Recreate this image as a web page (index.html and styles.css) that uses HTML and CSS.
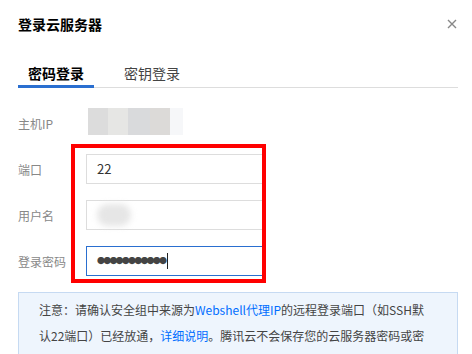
FILE: index.html
```html
<!DOCTYPE html>
<html lang="zh">
<head>
<meta charset="utf-8">
<link rel="stylesheet" href="styles.css">
</head>
<body>
<div class="dialog">
  <div class="header">
    <h1 class="title">登录云服务器</h1>
    <svg class="close" width="10" height="10" viewBox="0 0 10 10"><path d="M1 1L9 9M9 1L1 9" stroke="#888" stroke-width="1.4" fill="none"/></svg>
  </div>
  <div class="tabs">
    <div class="tab active">密码登录</div>
    <div class="tab">密钥登录</div>
  </div>
  <div class="form">
    <div class="row">
      <div class="label">主机IP</div>
      <div class="ip-blur">
        <span class="b1"></span><span class="b2"></span><span class="b3"></span><span class="b4"></span><span class="b5"></span>
      </div>
    </div>
    <div class="row">
      <div class="label">端口</div>
      <div class="input">22</div>
    </div>
    <div class="row">
      <div class="label">用户名</div>
      <div class="input"><span class="user-blur"></span></div>
    </div>
    <div class="row">
      <div class="label">登录密码</div>
      <div class="input focus"><span class="dots">●●●●●●●●●●●</span><span class="caret"></span></div>
    </div>
    <div class="redbox"></div>
  </div>
  <div class="notice">注意：请确认安全组中来源为<a class="link">Webshell代理IP</a>的远程登录端口（如SSH默认22端口）已经放通，<a class="link">详细说明</a>。腾讯云不会保存您的云服务器密码或密钥，请妥善保管避免丢失。</div>
</div>
</body>
</html>
```
FILE: styles.css
```css
* { box-sizing: border-box; margin: 0; padding: 0; }
html, body { background: #fff; }
body {
  font-family: "Noto Sans CJK SC", "Liberation Sans", sans-serif;
  color: #333;
  width: 472px;
  height: 354px;
  overflow: hidden;
}
.dialog { padding: 0 14px 0 18px; }
.header {
  display: flex;
  justify-content: space-between;
  align-items: center;
  height: 48px;
  padding-right: 1px;
}
.title { font-size: 14px; font-weight: bold; color: #000; line-height: 20px; }
.close { display: block; }
.tabs {
  display: flex;
  border-bottom: 1px solid #ddd;
  margin-top: 8px;
}
.tab {
  font-size: 14px;
  line-height: 20px;
  padding: 7px 10px 4px;
  color: #444;
  margin-right: 20px;
}
.tab.active {
  color: #000;
  font-weight: bold;
  border-bottom: 3px solid #2a6fd0;
  margin-bottom: -1px;
  padding-bottom: 1px;
}
.form { position: relative; padding-top: 20px; }
.row {
  display: flex;
  align-items: center;
  height: 30px;
  margin-bottom: 16px;
}
.label {
  width: 68px;
  font-size: 12px;
  color: #888;
}
.ip-blur { display: flex; height: 27px; margin-left: 2px; margin-top: -4px; }
.ip-blur span { display: block; height: 27px; }
.b1 { width: 20px; background: #dcdcdc; }
.b2 { width: 20px; background: #e6e6e4; }
.b3 { width: 22px; background: #d9dadc; }
.b4 { width: 20px; background: #dcdad8; }
.b5 { width: 13px; background: #f6f7f9; }
.input {
  width: 180px;
  height: 30px;
  border: 1px solid #ddd;
  font-size: 13px;
  color: #333;
  line-height: 28px;
  padding-left: 10px;
  display: flex;
  align-items: center;
}
.input.focus { border-color: #2a6fd0; }
.user-blur {
  display: block;
  width: 34px;
  height: 22px;
  border-radius: 11px;
  background: #e6e6e6;
  filter: blur(3px);
}
.dots { font-size: 8px; letter-spacing: -1.8px; color: #444; }
.caret { display: block; width: 1px; height: 16px; background: #222; margin-left: 2px; }
.redbox {
  position: absolute;
  left: 53px;
  top: 56px;
  width: 195px;
  height: 139px;
  border: 4px solid #f00;
}
.notice {
  margin-top: 1px;
  border: 1px solid #c6daf2;
  background: #eef5fd;
  font-size: 12px;
  line-height: 26px;
  color: #444;
  padding: 4px 29px 0 20px;
}
.link { color: #006eff; text-decoration: none; }
```
